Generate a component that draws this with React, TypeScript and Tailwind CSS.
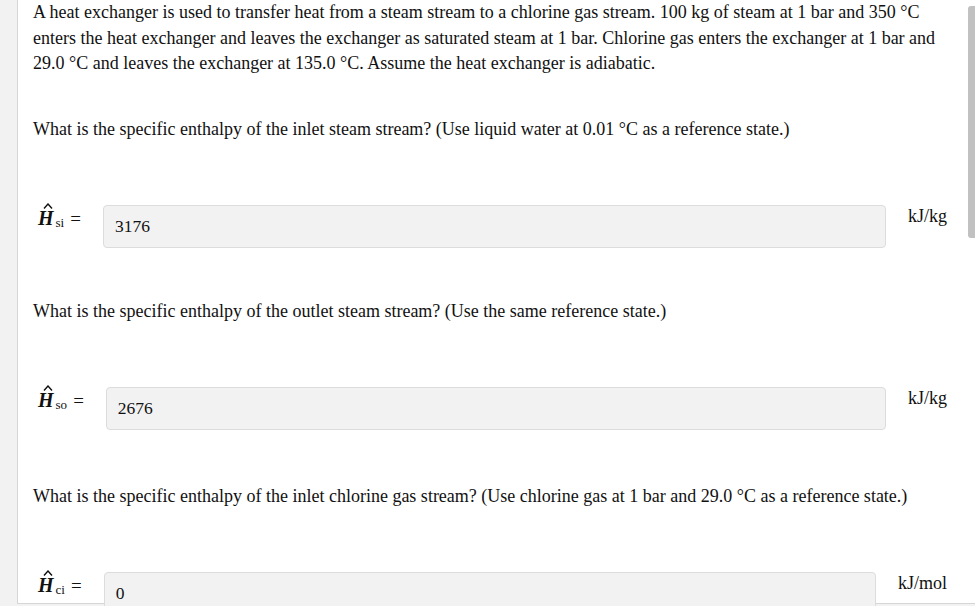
import React from "react";

function Row({ sub, value, unit }: { sub: string; value: string; unit: string }) {
  return (
    <div className="flex items-start">
      <div className="flex items-baseline pt-[1px] pl-[5px] whitespace-nowrap">
        <span className="relative italic text-[20px] font-bold">
          H
          <svg className="absolute left-[5px] -top-[3px]" width="10" height="6" viewBox="0 0 10 6">
            <path d="M1 5.5 L5 1 L9 5.5" fill="none" stroke="#111" strokeWidth="1.4" />
          </svg>
        </span>
        <span className="text-[13px] ml-[2px] translate-y-[2px]">{sub}</span>
        <span className="ml-[6px] text-[19px]">=</span>
      </div>
      <div className="ml-[22px] flex-1 h-[43px] bg-[#f2f2f2] border border-[#dcdcdc] rounded-[4px] flex items-center pt-[1px] px-[11px] text-[17.5px]">
        {value}
      </div>
      <div className="ml-[22px] pr-[1px] -mt-[1px] whitespace-nowrap">{unit}</div>
    </div>
  );
}

export default function App() {
  return (
    <div className="w-[975px] h-[606px] bg-[#f2f2f2] overflow-hidden" style={{ fontFamily: '"Liberation Serif", serif' }}>
      <div className="relative ml-[17px] h-[604px] bg-white border-l border-b border-[#d6d6d6] text-[18px] leading-[25.5px] text-[#111]">
        <div className="absolute right-0 top-[6px] w-[7px] h-[232px] bg-[#c1c1c1] rounded-tl-[3px] rounded-bl-[3px]" />
        <div className="pl-[15px] pr-[27px]">
          <p className="pt-0">
            A heat exchanger is used to transfer heat from a steam stream to a chlorine gas stream. 100 kg of steam at 1 bar and 350 °C
            <br />
            enters the heat exchanger and leaves the exchanger as saturated steam at 1 bar. Chlorine gas enters the exchanger at 1 bar and
            <br />
            29.0 °C and leaves the exchanger at 135.0 °C. Assume the heat exchanger is adiabatic.
          </p>
          <p className="mt-[40px]">
            What is the specific enthalpy of the inlet steam stream? (Use liquid water at 0.01 °C as a reference state.)
          </p>
          <div className="mt-[63px]">
            <Row sub="si" value="3176" unit="kJ/kg" />
          </div>
          <p className="mt-[51px]">
            What is the specific enthalpy of the outlet steam stream? (Use the same reference state.)
          </p>
          <div className="mt-[62px]">
            <Row sub="so" value="2676" unit="kJ/kg" />
          </div>
          <p className="mt-[54px]">
            What is the specific enthalpy of the inlet chlorine gas stream? (Use chlorine gas at 1 bar and 29.0 °C as a reference state.)
          </p>
          <div className="mt-[63px]">
            <Row sub="ci" value="0" unit="kJ/mol" />
          </div>
        </div>
      </div>
    </div>
  );
}
